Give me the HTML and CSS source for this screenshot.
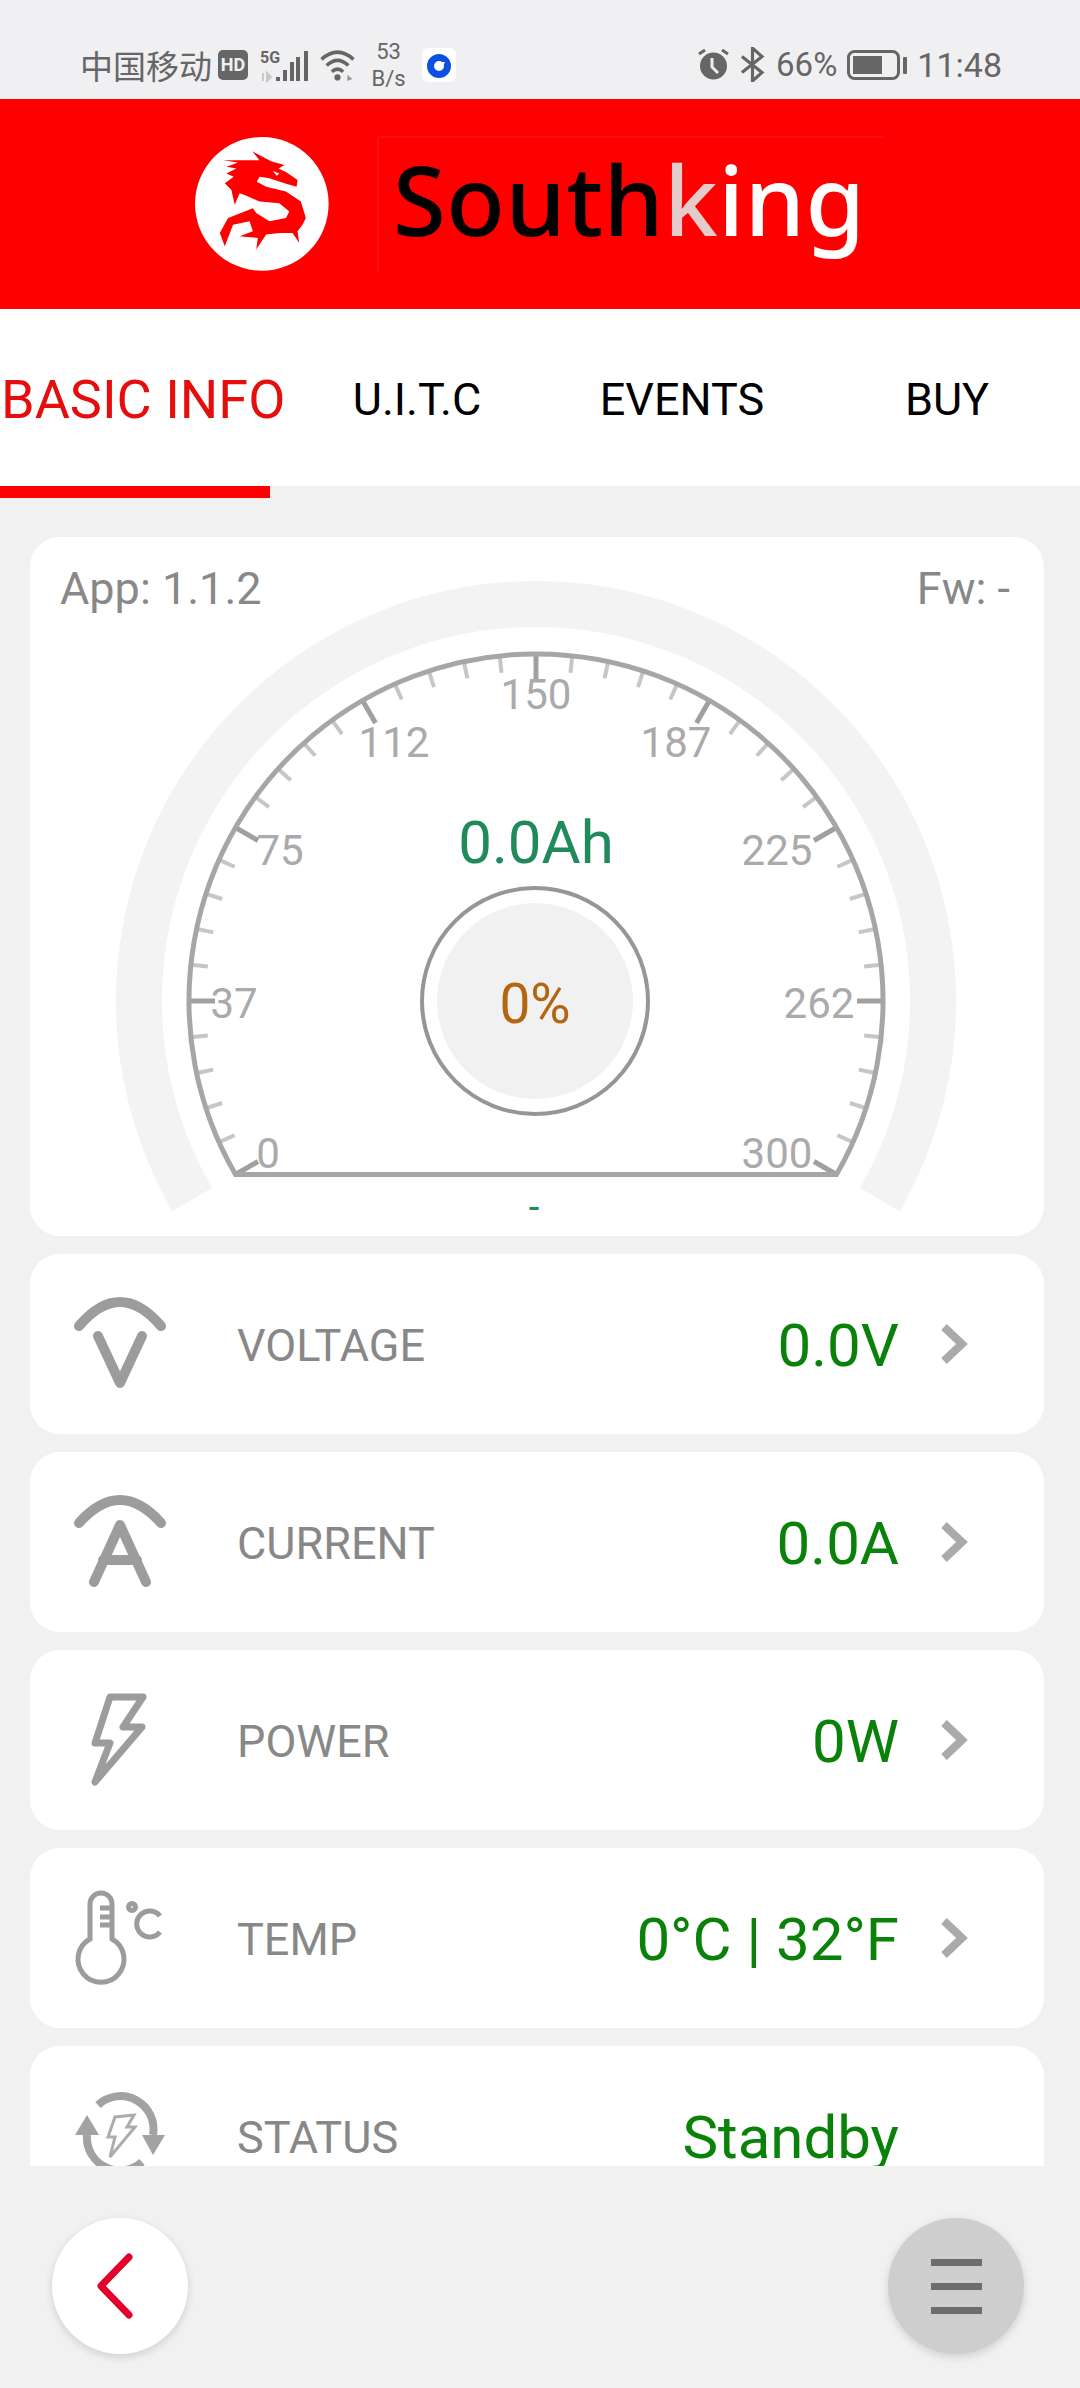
FILE: index.html
```html
<!DOCTYPE html>
<html lang="en">
<head>
  <meta charset="UTF-8">
  <meta name="viewport" content="width=device-width, initial-scale=1.0">
  <title>Southking Battery Monitor</title>
  <link rel="stylesheet" href="styles.css">
</head>
<body>
  <div class="status-bar">
    <span class="carrier">中国移动</span>
    <span class="hd-badge">HD</span>
    <svg class="net-icon" width="48" height="36" viewBox="0 -4 48 36">
      <text class="net-label" x="0" y="12">5G</text>
      <path d="M3 22v8M7 22l4 4-4 4z" stroke="#c8c8c8" stroke-width="2" fill="#c8c8c8"/>
      <g fill="#666">
        <rect x="16" y="26" width="4" height="4"/>
        <rect x="23" y="19" width="4" height="11"/>
        <rect x="30" y="11" width="4" height="19"/>
        <rect x="36" y="6" width="4" height="24"/>
        <rect x="44" y="0" width="4" height="30"/>
      </g>
    </svg>
    <svg class="wifi-icon" width="37" height="33" viewBox="0 0 35 32">
      <g fill="none" stroke="#666" stroke-width="3.5">
        <path d="M2 11Q17.5 -3 33 11"/>
        <path d="M7 17Q17.5 7 28 17"/>
        <path d="M12 23Q17.5 18 23 23"/>
      </g>
      <circle cx="17.5" cy="28.5" r="3" fill="#666"/>
      <path d="M27 26l5 4-5 2z" fill="#999"/>
    </svg>
    <span class="speed">53<br>B/s</span>
    <svg class="app-icon" width="34" height="34" viewBox="0 0 34 34">
      <rect width="34" height="34" rx="6" fill="#fff"/>
      <circle cx="17" cy="18" r="8.5" fill="none" stroke="#0b50e0" stroke-width="7"/>
      <path d="M17 14h6l-3 6z" fill="#fff"/>
    </svg>
    <div class="status-right">
      <svg width="31" height="31" viewBox="0 0 31 31">
        <circle cx="15.5" cy="17" r="13.5" fill="#666"/>
        <path d="M14 9v9l6 6" fill="none" stroke="#eee" stroke-width="3"/>
        <path d="M1 5l6-4M30 5l-6-4" stroke="#666" stroke-width="3"/>
      </svg>
      <svg width="27" height="35" viewBox="0 0 24 33">
        <path d="M2 9L21 24L12 32V1L21 9L2 24" fill="none" stroke="#666" stroke-width="3"/>
      </svg>
      <span class="status-text">66%</span>
      <svg width="60" height="30" viewBox="0 0 60 30">
        <rect x="1.5" y="1.5" width="50" height="27" rx="6" fill="none" stroke="#666" stroke-width="3"/>
        <rect x="6" y="6" width="29" height="18" fill="#666"/>
        <rect x="56" y="7" width="4" height="17" rx="1" fill="#666"/>
      </svg>
      <span class="status-text status-time">11:48</span>
    </div>
  </div>

  <header class="brand">
    <svg class="brand-logo" width="134" height="134" viewBox="75 55 405 405">
      <circle cx="277" cy="257" r="202" fill="#fff"/>
      <path fill="#f00" d="M248 98L305 128L345 140L328 150L352 162L385 185L382 205L345 195L300 180L270 175L262 190L290 205L350 220L395 250L410 300L400 320L385 340L390 375L370 345L330 345L290 350L260 395L265 360L210 355L250 340L240 310L190 320L165 385L150 345L175 300L250 270L260 285L300 310L350 300L360 280L330 255L270 250L225 230L210 225L195 260L185 215L165 195L192 175L170 165L200 150L170 145L205 132L160 125L270 125Z"/>
      <path fill="#fff" d="M310 158L330 165L322 172Z"/>
    </svg>
    <div class="wordmark"><span class="wm-dark">South</span><span class="wm-fade">k</span><span class="wm-light">ing</span></div>
  </header>

  <nav class="tabs">
    <div class="tab tab-active">BASIC INFO</div>
    <div class="tab">U.I.T.C</div>
    <div class="tab">EVENTS</div>
    <div class="tab tab-last">BUY</div>
  </nav>

  <main class="content">
    <section class="card gauge-card">
      <div class="gauge-meta">
        <span>App: 1.1.2</span>
        <span>Fw: -</span>
      </div>
      <svg class="gauge" width="1014" height="699" viewBox="30 537 1014 699">
        <path d="M192.2 1199.5A397 397 0 1 1 879.8 1199.5" fill="none" stroke="#f3f3f3" stroke-width="46"/>
        <defs>
          <line id="tick-minor" x1="536" y1="656" x2="536" y2="671" stroke="#c6c6c6" stroke-width="4"/>
          <line id="tick-major" x1="536" y1="653" x2="536" y2="680" stroke="#a0a0a0" stroke-width="5"/>
        </defs>
        <g>
          <use href="#tick-minor" transform="rotate(-114 536 1001)"/>
          <use href="#tick-minor" transform="rotate(-108 536 1001)"/>
          <use href="#tick-minor" transform="rotate(-102 536 1001)"/>
          <use href="#tick-minor" transform="rotate(-96 536 1001)"/>
          <use href="#tick-minor" transform="rotate(-84 536 1001)"/>
          <use href="#tick-minor" transform="rotate(-78 536 1001)"/>
          <use href="#tick-minor" transform="rotate(-72 536 1001)"/>
          <use href="#tick-minor" transform="rotate(-66 536 1001)"/>
          <use href="#tick-minor" transform="rotate(-54 536 1001)"/>
          <use href="#tick-minor" transform="rotate(-48 536 1001)"/>
          <use href="#tick-minor" transform="rotate(-42 536 1001)"/>
          <use href="#tick-minor" transform="rotate(-36 536 1001)"/>
          <use href="#tick-minor" transform="rotate(-24 536 1001)"/>
          <use href="#tick-minor" transform="rotate(-18 536 1001)"/>
          <use href="#tick-minor" transform="rotate(-12 536 1001)"/>
          <use href="#tick-minor" transform="rotate(-6 536 1001)"/>
          <use href="#tick-minor" transform="rotate(6 536 1001)"/>
          <use href="#tick-minor" transform="rotate(12 536 1001)"/>
          <use href="#tick-minor" transform="rotate(18 536 1001)"/>
          <use href="#tick-minor" transform="rotate(24 536 1001)"/>
          <use href="#tick-minor" transform="rotate(36 536 1001)"/>
          <use href="#tick-minor" transform="rotate(42 536 1001)"/>
          <use href="#tick-minor" transform="rotate(48 536 1001)"/>
          <use href="#tick-minor" transform="rotate(54 536 1001)"/>
          <use href="#tick-minor" transform="rotate(66 536 1001)"/>
          <use href="#tick-minor" transform="rotate(72 536 1001)"/>
          <use href="#tick-minor" transform="rotate(78 536 1001)"/>
          <use href="#tick-minor" transform="rotate(84 536 1001)"/>
          <use href="#tick-minor" transform="rotate(96 536 1001)"/>
          <use href="#tick-minor" transform="rotate(102 536 1001)"/>
          <use href="#tick-minor" transform="rotate(108 536 1001)"/>
          <use href="#tick-minor" transform="rotate(114 536 1001)"/>
          <use href="#tick-major" transform="rotate(-120 536 1001)"/>
          <use href="#tick-major" transform="rotate(-90 536 1001)"/>
          <use href="#tick-major" transform="rotate(-60 536 1001)"/>
          <use href="#tick-major" transform="rotate(-30 536 1001)"/>
          <use href="#tick-major" transform="rotate(0 536 1001)"/>
          <use href="#tick-major" transform="rotate(30 536 1001)"/>
          <use href="#tick-major" transform="rotate(60 536 1001)"/>
          <use href="#tick-major" transform="rotate(90 536 1001)"/>
          <use href="#tick-major" transform="rotate(120 536 1001)"/>
        </g>
        <path d="M235.5 1174.5A347 347 0 1 1 836.5 1174.5Z" fill="none" stroke="#a6a6a6" stroke-width="5"/>
        <text class="scale" x="536" y="709">150</text>
        <text class="scale" x="394" y="757">112</text>
        <text class="scale" x="676" y="757">187</text>
        <text class="scale" x="280" y="865">75</text>
        <text class="scale" x="777" y="865">225</text>
        <text class="scale" x="234" y="1018">37</text>
        <text class="scale" x="819" y="1018">262</text>
        <text class="scale" x="268" y="1168">0</text>
        <text class="scale" x="777" y="1168">300</text>
        <text class="capacity" x="536" y="863">0.0Ah</text>
        <circle cx="535" cy="1001" r="113" fill="#fff" stroke="#969696" stroke-width="4"/>
        <circle cx="535" cy="1001" r="98" fill="#f1f1f1"/>
        <text class="percent" x="535" y="1023">0%</text>
        <text class="gauge-state" x="534" y="1220">-</text>
      </svg>
    </section>

    <div class="card row">
      <svg class="row-icon" width="100" height="100" viewBox="0 0 100 100">
        <g fill="none" stroke="#9c9c9c" stroke-width="10" stroke-linecap="round" stroke-linejoin="round">
          <path d="M9 32Q50 -16 91 32"/>
          <path d="M28 42L50 89L72 42"/>
        </g>
      </svg>
      <span class="row-label">VOLTAGE</span>
      <span class="row-value">0.0V</span>
      <svg class="row-arrow" width="30" height="44" viewBox="0 0 30 44">
        <path d="M6 5L24 22L6 39" fill="none" stroke="#aaa" stroke-width="8"/>
      </svg>
    </div>

    <div class="card row">
      <svg class="row-icon" width="100" height="100" viewBox="0 0 100 100">
        <g fill="none" stroke="#9c9c9c" stroke-width="10" stroke-linecap="round" stroke-linejoin="round">
          <path d="M9 31Q50 -15 91 31"/>
          <path d="M24 90L50 33L76 90M33 68H67"/>
        </g>
      </svg>
      <span class="row-label">CURRENT</span>
      <span class="row-value">0.0A</span>
      <svg class="row-arrow" width="30" height="44" viewBox="0 0 30 44">
        <path d="M6 5L24 22L6 39" fill="none" stroke="#aaa" stroke-width="8"/>
      </svg>
    </div>

    <div class="card row">
      <svg class="row-icon" width="100" height="100" viewBox="0 0 100 100">
        <path d="M40 7H73L53 37H72L25 92L40 53H25Z" fill="none" stroke="#9c9c9c" stroke-width="7" stroke-linejoin="round"/>
      </svg>
      <span class="row-label">POWER</span>
      <span class="row-value">0W</span>
      <svg class="row-arrow" width="30" height="44" viewBox="0 0 30 44">
        <path d="M6 5L24 22L6 39" fill="none" stroke="#aaa" stroke-width="8"/>
      </svg>
    </div>

    <div class="card row">
      <svg class="row-icon" width="100" height="100" viewBox="0 0 100 100">
        <g fill="none" stroke="#9c9c9c" stroke-width="5">
          <path d="M20 51V16A11 11 0 0 1 42 16V51A23 23 0 1 1 20 51Z"/>
          <path d="M30 20H42M30 29H42M30 37H42"/>
          <circle cx="62" cy="19" r="3.5"/>
          <path d="M90 28A13 13 0 1 0 90 44"/>
        </g>
      </svg>
      <span class="row-label">TEMP</span>
      <span class="row-value">0°C | 32°F</span>
      <svg class="row-arrow" width="30" height="44" viewBox="0 0 30 44">
        <path d="M6 5L24 22L6 39" fill="none" stroke="#aaa" stroke-width="8"/>
      </svg>
    </div>

    <div class="card row">
      <svg class="row-icon" width="100" height="100" viewBox="0 0 100 100">
        <g fill="none" stroke="#a2a2a2" stroke-width="8">
          <path d="M28 19A33 33 0 0 1 83 49"/>
          <path d="M17 49A33 33 0 0 0 72 76"/>
        </g>
        <path d="M72 49H95L83 69ZM5 49H29L17 29Z" fill="#a2a2a2"/>
        <path d="M45 31L64 29L57 41H65L40 71L45 51H38Z" fill="none" stroke="#acacac" stroke-width="3"/>
      </svg>
      <span class="row-label">STATUS</span>
      <span class="row-value">Standby</span>
      <span class="row-arrow row-arrow-empty"></span>
    </div>
  </main>

  <footer class="bottom-bar">
    <button class="round-btn">
      <svg width="48" height="72" viewBox="0 0 48 72">
        <path d="M33 7L5 36L33 65" fill="none" stroke="#e4002b" stroke-width="7" stroke-linecap="round" stroke-linejoin="round"/>
      </svg>
    </button>
    <button class="round-btn round-btn-menu">
      <span></span>
      <span></span>
      <span></span>
    </button>
  </footer>
</body>
</html>
```

FILE: styles.css
```css
:root {
  --page: #f1f1f2;
  --red: #ff0000;
  --status: #666666;
  --muted: #888888;
  --green: #0a820a;
  --teal: #1f8a5a;
}

* {
  margin: 0;
  padding: 0;
  box-sizing: border-box;
}

body {
  width: 1080px;
  height: 2388px;
  overflow: hidden;
  font-family: Roboto, "Noto Sans CJK SC", sans-serif;
  background-color: var(--page);
}

/* status bar */
.status-bar {
  display: flex;
  align-items: center;
  height: 99px;
  padding: 30px 78px 0 80px;
  color: var(--status);
  background-color: #f0f0f2;
}

.carrier {
  font-size: 33px;
  margin-right: 6px;
}

.hd-badge {
  width: 30px;
  height: 30px;
  margin-right: 12px;
  border-radius: 5px;
  background-color: var(--status);
  color: #f0f0f2;
  font-size: 18px;
  font-weight: bold;
  line-height: 30px;
  text-align: center;
}

.net-icon {
  margin-right: 11px;
}

.net-label {
  font-size: 16px;
  font-weight: bold;
  fill: var(--status);
}

.wifi-icon {
  margin-right: 15px;
}

.speed {
  width: 35px;
  margin-right: 16px;
  font-size: 22px;
  line-height: 27px;
  text-align: center;
}

.status-right {
  display: flex;
  align-items: center;
  gap: 10px;
  margin-left: auto;
}

.status-text {
  font-size: 33px;
}

.status-time {
  font-size: 34px;
}

/* red brand header */
.brand {
  display: flex;
  align-items: center;
  gap: 48px;
  height: 210px;
  padding-left: 195px;
  background-color: var(--red);
}

.wordmark {
  width: 508px;
  height: 137px;
  padding-left: 14px;
  border-top: 2px solid #f01212;
  border-left: 2px solid #f01212;
  font-family: "Noto Sans", sans-serif;
  font-size: 96px;
  font-weight: 500;
  letter-spacing: 0.5px;
  line-height: 121px;
}

.wm-dark {
  color: #000;
}

.wm-fade {
  color: #e4cccc;
}

.wm-light {
  color: #fff;
}

/* tabs */
.tabs {
  position: relative;
  display: grid;
  grid-template-columns: 270px 294px 236px 1fr;
  height: 177px;
  background-color: #fff;
}

.tabs::after {
  content: "";
  position: absolute;
  top: 100%;
  left: 0;
  width: 270px;
  height: 12px;
  background-color: var(--red);
}

.tab {
  padding-top: 61px;
  color: #000;
  font-size: 45px;
  line-height: 60px;
  text-align: center;
  white-space: nowrap;
}

.tab-active {
  padding-left: 1px;
  color: #e60d0d;
  font-size: 54px;
  text-align: left;
}

.tab-last {
  padding-left: 14px;
}

/* scrolling content */
.content {
  display: flex;
  flex-direction: column;
  gap: 18px;
  height: 1680px;
  padding: 51px 36px 0 30px;
  overflow: hidden;
}

.card {
  flex-shrink: 0;
  border-radius: 30px;
  background-color: #fff;
}

.gauge-card {
  position: relative;
  height: 699px;
}

.gauge-meta {
  position: absolute;
  top: 26px;
  left: 30px;
  right: 34px;
  display: flex;
  justify-content: space-between;
  color: var(--muted);
  font-size: 45px;
  line-height: 52px;
}

.gauge {
  display: block;
}

.scale {
  fill: #aaa;
  font-size: 42px;
  text-anchor: middle;
}

.capacity {
  fill: var(--teal);
  font-size: 60px;
  text-anchor: middle;
}

.percent {
  fill: #b5640f;
  font-size: 55px;
  text-anchor: middle;
}

.gauge-state {
  fill: var(--teal);
  font-size: 38px;
  text-anchor: middle;
}

.row {
  display: flex;
  align-items: center;
  height: 180px;
  padding: 2px 76px 0 40px;
}

.row-icon {
  flex-shrink: 0;
  margin-top: -2px;
  margin-right: 67px;
}

.row-label {
  color: var(--muted);
  font-size: 45px;
}

.row-value {
  margin-left: auto;
  margin-right: 39px;
  color: var(--green);
  font-size: 60px;
}

.row-arrow {
  flex-shrink: 0;
  margin-top: -2px;
}

.row-arrow-empty {
  width: 30px;
}

/* bottom buttons */
.bottom-bar {
  display: flex;
  justify-content: space-between;
  padding: 52px 56px 0 52px;
}

.round-btn {
  display: flex;
  flex-direction: column;
  align-items: center;
  justify-content: center;
  gap: 17px;
  width: 136px;
  height: 136px;
  border: none;
  border-radius: 50%;
  background-color: #fff;
  box-shadow: 0 3px 8px rgba(0, 0, 0, 0.14);
}

.round-btn-menu {
  background-color: #cecece;
}

.round-btn-menu span {
  width: 51px;
  height: 7px;
  background-color: #6d6d6d;
}
```
